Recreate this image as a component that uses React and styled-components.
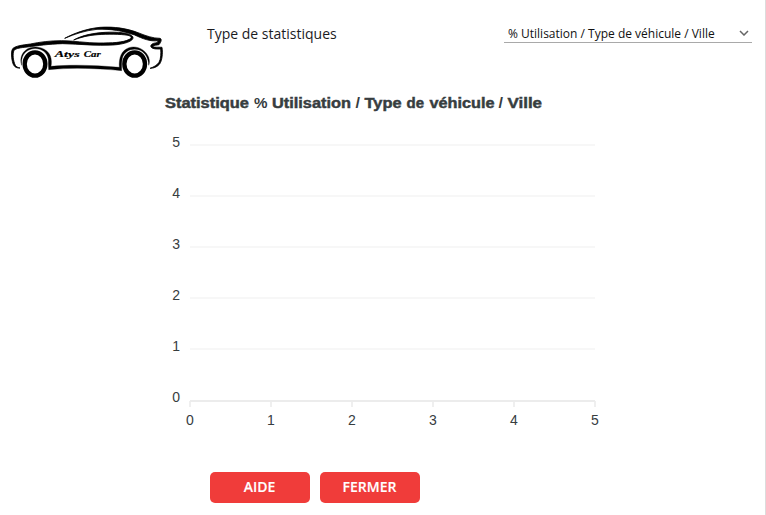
import React from "react";
import styled, { createGlobalStyle } from "styled-components";

const GlobalStyle = createGlobalStyle`
  * { box-sizing: border-box; }
  body { margin: 0; background: #fff; font-family: "Open Sans", sans-serif; }
`;

const Page = styled.main`
  width: 766px;
  height: 515px;
  display: flex;
  flex-direction: column;
  overflow: hidden;
  border-right: 1px solid #dcdcdc;
`;

const Header = styled.header`
  height: 88px;
  display: flex;
  align-items: flex-start;
`;

const Logo = styled.svg`
  width: 170px;
  height: 88px;
  flex: none;
`;

const FieldLabel = styled.label`
  width: 297px;
  margin: 24px 0 0 37px;
  font-size: 14px;
  line-height: 20px;
  color: #1b1b1f;
`;

const Select = styled.button`
  width: 248px;
  height: 20px;
  margin-top: 23px;
  padding: 2px 3px 0 4px;
  display: flex;
  align-items: center;
  justify-content: space-between;
  border: 0;
  border-bottom: 1px solid #a9a9a9;
  background: none;
  color: #111;
  font: 12px/17px "Open Sans", sans-serif;
  white-space: nowrap;
`;

const Chevron = styled.svg`
  width: 10px;
  height: 6px;
  margin-top: -1px;
`;

const Chart = styled.svg`
  width: 765px;
  height: 384px;
  flex: none;
  font-family: "Liberation Sans", Arial, sans-serif;
`;

const ChartTitle = styled.text`
  font-size: 14px;
  font-weight: 700;
  fill: #373d3f;
  stroke: #373d3f;
  stroke-width: ${(p) => (p.$light ? 0 : 0.45)};
`;

const Tick = styled.text`
  font-size: 14px;
  fill: #373d3f;
  text-anchor: ${(p) => p.$anchor};
`;

const Actions = styled.footer`
  display: flex;
  gap: 10px;
  padding-left: 210px;
`;

const ActionButton = styled.button`
  width: 100px;
  height: 31px;
  padding: 0 1px 1px 0;
  border: 0;
  border-radius: 5px;
  background: #f03c3a;
  color: #fff;
  font: 600 14px/20px "Open Sans", sans-serif;
  -webkit-text-stroke: 0.15px #fff;
`;

const titleWords = [
  ["Statistique", 165, 84],
  ["%", 254, 13.5, true],
  ["Utilisation", 272, 79],
  ["/", 355.5, 4.5, true],
  ["Type", 364.5, 37],
  ["de", 406.5, 17.5],
  ["véhicule", 429.5, 65],
  ["/", 498.5, 4.5, true],
  ["Ville", 507.5, 34.5],
];

const steps = [0, 1, 2, 3, 4, 5];

const LogoText = styled.text`
  font: italic 700 25px "Liberation Serif", serif;
  stroke: #000;
  stroke-width: 0.5;
`;

function CarLogo() {
  return (
    <Logo viewBox="0 -45 510 264" role="img" aria-label="Atys Car">
      <g stroke="#000" strokeWidth="2.500" strokeLinejoin="round">
        {/* body outline */}
        <path d="M60 159C46 160 40 153 37 139C34 125 33 108 38 101C47 92 69 90 91 87C119 81 151 77 184 77C222 77 256 84 297 84C336 84 369 83 388 73C396 69 395 64 384 61C361 57 324 57 294 59C264 61 242 67 221 75C246 61 279 54 316 52C350 50 393 53 399 66C402 79 371 88 339 90C288 93 239 87 188 86C146 87 113 92 82 96C62 98 48 100 42 106C37 118 40 139 46 151C50 156 54 158 60 159Z" />
        <path d="M194 70C222 55 259 41 300 37C344 34 383 41 414 53C439 63 459 70 480 70C486 72 484 81 477 89C469 91 461 90 459 94C461 98 474 96 486 97C489 116 486 137 479 147C471 156 462 160 450 160C461 156 471 151 477 142C483 131 483 114 482 102C472 102 457 103 453 96C450 88 460 84 471 83L475 77C449 80 428 71 404 60C370 48 332 41 291 43C253 47 225 57 194 70Z" />
      </g>
      {/* wheel arches and sill */}
      <path stroke="#000" d="M65 151C57 128 68 105 91 98C116 91 143 102 151 123C155 134 155 145 153 154C217 148 289 151 358 157C356 128 364 106 387 98C411 90 438 105 446 127C449 137 449 145 446 151C446 131 436 113 420 106C398 96 374 108 368 126C364 138 365 151 365 167C294 160 219 157 146 164L145 145C148 125 137 109 120 103C96 95 73 108 67 127C64 136 64 143 65 151Z" />
      <g fill="#fff" stroke="#000" strokeWidth="13">
        <ellipse cx="105" cy="147" rx="31" ry="35" />
        <ellipse cx="404" cy="147" rx="31" ry="35" />
      </g>
      <LogoText x="164" y="126" textLength="75" lengthAdjust="spacingAndGlyphs">Atys</LogoText>
      <LogoText x="251" y="126" textLength="51" lengthAdjust="spacingAndGlyphs">Car</LogoText>
    </Logo>
  );
}

function StatsChart() {
  return (
    <Chart viewBox="0 88 765 384">
      {titleWords.map(([word, x, width, light]) => (
        <ChartTitle key={x} x={x} y="108" textLength={width} lengthAdjust="spacingAndGlyphs" $light={light}>
          {word}
        </ChartTitle>
      ))}
      {steps.map((n) => (
        <g key={n}>
          {n > 0 && <path d={`M190 ${400 - n * 51}H595`} stroke="#f7f7f7" strokeWidth="2" />}
          <Tick x="180" y={402 - n * 51} $anchor="end">{n}</Tick>
          <path d={`M${190 + n * 81} 401v6`} stroke="#efefef" strokeWidth="2" />
          <Tick x={190 + n * 81} y="425" $anchor="middle">{n}</Tick>
        </g>
      ))}
      <path d="M190 401H595" stroke="#ececec" strokeWidth="2" />
    </Chart>
  );
}

export default function App() {
  return (
    <>
      <GlobalStyle />
      <Page>
        <Header>
          <CarLogo />
          <FieldLabel>Type de statistiques</FieldLabel>
          <Select>
            % Utilisation / Type de véhicule / Ville
            <Chevron viewBox="0 0 10 6" fill="none" stroke="#666" strokeWidth="1.500">
              <path d="M1 1l4 4 4-4" />
            </Chevron>
          </Select>
        </Header>
        <StatsChart />
        <Actions>
          <ActionButton>AIDE</ActionButton>
          <ActionButton>FERMER</ActionButton>
        </Actions>
      </Page>
    </>
  );
}
